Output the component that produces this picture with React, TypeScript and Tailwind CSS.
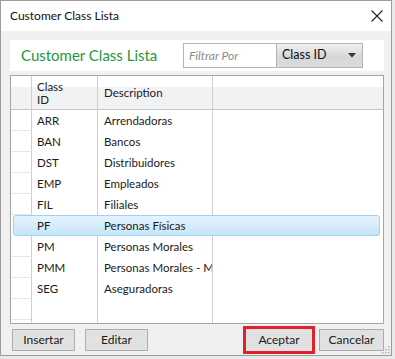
import React from "react";

const rows: [string, string][] = [
  ["ARR", "Arrendadoras"],
  ["BAN", "Bancos"],
  ["DST", "Distribuidores"],
  ["EMP", "Empleados"],
  ["FIL", "Filiales"],
  ["PF", "Personas Físicas"],
  ["PM", "Personas Morales"],
  ["PMM", "Personas Morales - M"],
  ["SEG", "Aseguradoras"],
];

const font = { fontFamily: "Lato, 'Liberation Sans', sans-serif" };

function Btn({ label, className = "" }: { label: string; className?: string }) {
  return (
    <div
      className={`h-[22px] w-[63px] bg-[#e1e1e1] border border-[#adadad] flex items-center justify-center text-[12px] text-[#1a1a1a] ${className}`}
    >
      {label}
    </div>
  );
}

export default function App() {
  return (
    <div className="w-[395px] h-[359px] bg-[#e9e9e9] overflow-hidden" style={font}>
      <div className="w-[392px] h-[356px] border border-[#9c9c9c] bg-[#f0f0f0] flex flex-col relative">
        {/* Title bar */}
        <div className="h-[30px] bg-white flex items-center justify-between pl-[9px] pr-[7px] shrink-0">
          <span className="text-[12px] text-[#111]">Customer Class Lista</span>
          <svg width="12" height="12" viewBox="0 0 12 12" className="mr-[1px]">
            <path d="M0.5 0.5 L11.5 11.5 M11.5 0.5 L0.5 11.5" stroke="#222" strokeWidth="1.1" />
          </svg>
        </div>

        {/* Body */}
        <div className="flex flex-col pl-[9px] pt-[9px]">
          {/* Header panel */}
          <div className="w-[374px] h-[31px] bg-white flex items-center justify-between pl-[11px] pr-[21px]">
            <span className="text-[15px] text-[#23993b] leading-none">Customer Class Lista</span>
            <div className="flex h-[25px] border border-[#b4b4b4]">
              <div className="w-[92px] bg-white flex items-center pl-[5px] text-[12px] italic text-[#8c8c8c]">
                Filtrar Por
              </div>
              <div className="w-[86px] border-l border-[#b4b4b4] bg-[linear-gradient(to_bottom,#f2f2f2,#d6d6d6_55%,#dcdcdc)] flex items-center justify-between pl-[5px] pr-[6px] text-[12.5px] text-[#111]">
                <span>Class ID</span>
                <svg width="8" height="5" viewBox="0 0 8 5">
                  <path d="M0 0 H8 L4 4.5 Z" fill="#333" />
                </svg>
              </div>
            </div>
          </div>

          {/* Grid */}
          <div className="mt-[4px] w-[374px] h-[249px] border border-[#a5a5a5] bg-white flex flex-col overflow-hidden">
            {/* Header row */}
            <div className="h-[34px] shrink-0 flex border-b border-[#c4c4c4] bg-[linear-gradient(to_bottom,#ffffff_0%,#ffffff_32%,#f1f2f4_34%,#f1f2f4_100%)] text-[11.5px] text-[#1a1a1a]">
              <div className="w-[21px] border-r border-[#cfcfcf]" />
              <div className="w-[66px] border-r border-[#cfcfcf] pl-[5px] flex flex-col justify-center leading-[13px]">
                <span>Class</span>
                <span>ID</span>
              </div>
              <div className="w-[115px] border-r border-[#cfcfcf] pl-[6px] flex items-center">Description</div>
              <div className="flex-1" />
            </div>
            {/* Rows */}
            {rows.map(([id, desc]) => {
              const sel = id === "PF";
              return (
                <div key={id} className="h-[21px] shrink-0 flex relative text-[11.5px] text-[#1a1a1a]">
                  {sel && (
                    <div className="absolute left-[2px] right-[3px] top-0 bottom-0 rounded-[3px] border border-[#9fd2f2] bg-[linear-gradient(to_bottom,#e6f4fd,#c6e5f8)]" />
                  )}
                  <div className={`w-[21px] border-r ${sel ? "border-transparent" : "border-[#cfcfcf] border-b border-b-[#e6e6e6]"}`} />
                  <div className={`w-[66px] border-r ${sel ? "border-transparent" : "border-[#cfcfcf]"} pl-[5px] flex items-center relative`}>
                    {id}
                  </div>
                  <div className={`w-[115px] border-r ${sel ? "border-transparent" : "border-[#cfcfcf]"} pl-[6px] flex items-center relative whitespace-nowrap overflow-hidden`}>
                    {desc}
                  </div>
                  <div className="flex-1" />
                </div>
              );
            })}
            <div className="flex-1 flex">
              <div className="w-[21px] border-r border-[#cfcfcf] flex flex-col">
                <div className="h-[21px] border-b border-[#e6e6e6]" />
                <div className="flex-1" />
              </div>
              <div className="w-[66px] border-r border-[#cfcfcf]" />
              <div className="w-[115px] border-r border-[#cfcfcf]" />
              <div className="flex-1" />
            </div>
          </div>

          {/* Buttons */}
          <div className="h-[31px] w-[374px] flex items-center">
            <Btn label="Insertar" className="ml-[2px]" />
            <Btn label="Editar" className="ml-[10px]" />
            <div className="ml-auto border-[3px] border-[#e0202a] p-0 mt-[1px]">
              <Btn label="Aceptar" className="w-[66px] border-[#e1e1e1]" />
            </div>
            <Btn label="Cancelar" className="ml-[4px] w-[65px]" />
          </div>
        </div>

        {/* resize grip */}
        <svg width="9" height="9" viewBox="0 0 9 9" className="absolute right-[1px] bottom-[1px]">
          <rect x="7" y="1" width="1.5" height="1.5" fill="#b0b0b0" />
          <rect x="4" y="4" width="1.5" height="1.5" fill="#b0b0b0" />
          <rect x="7" y="4" width="1.5" height="1.5" fill="#b0b0b0" />
          <rect x="1" y="7" width="1.5" height="1.5" fill="#b0b0b0" />
          <rect x="4" y="7" width="1.5" height="1.5" fill="#b0b0b0" />
          <rect x="7" y="7" width="1.5" height="1.5" fill="#b0b0b0" />
        </svg>
      </div>
    </div>
  );
}
